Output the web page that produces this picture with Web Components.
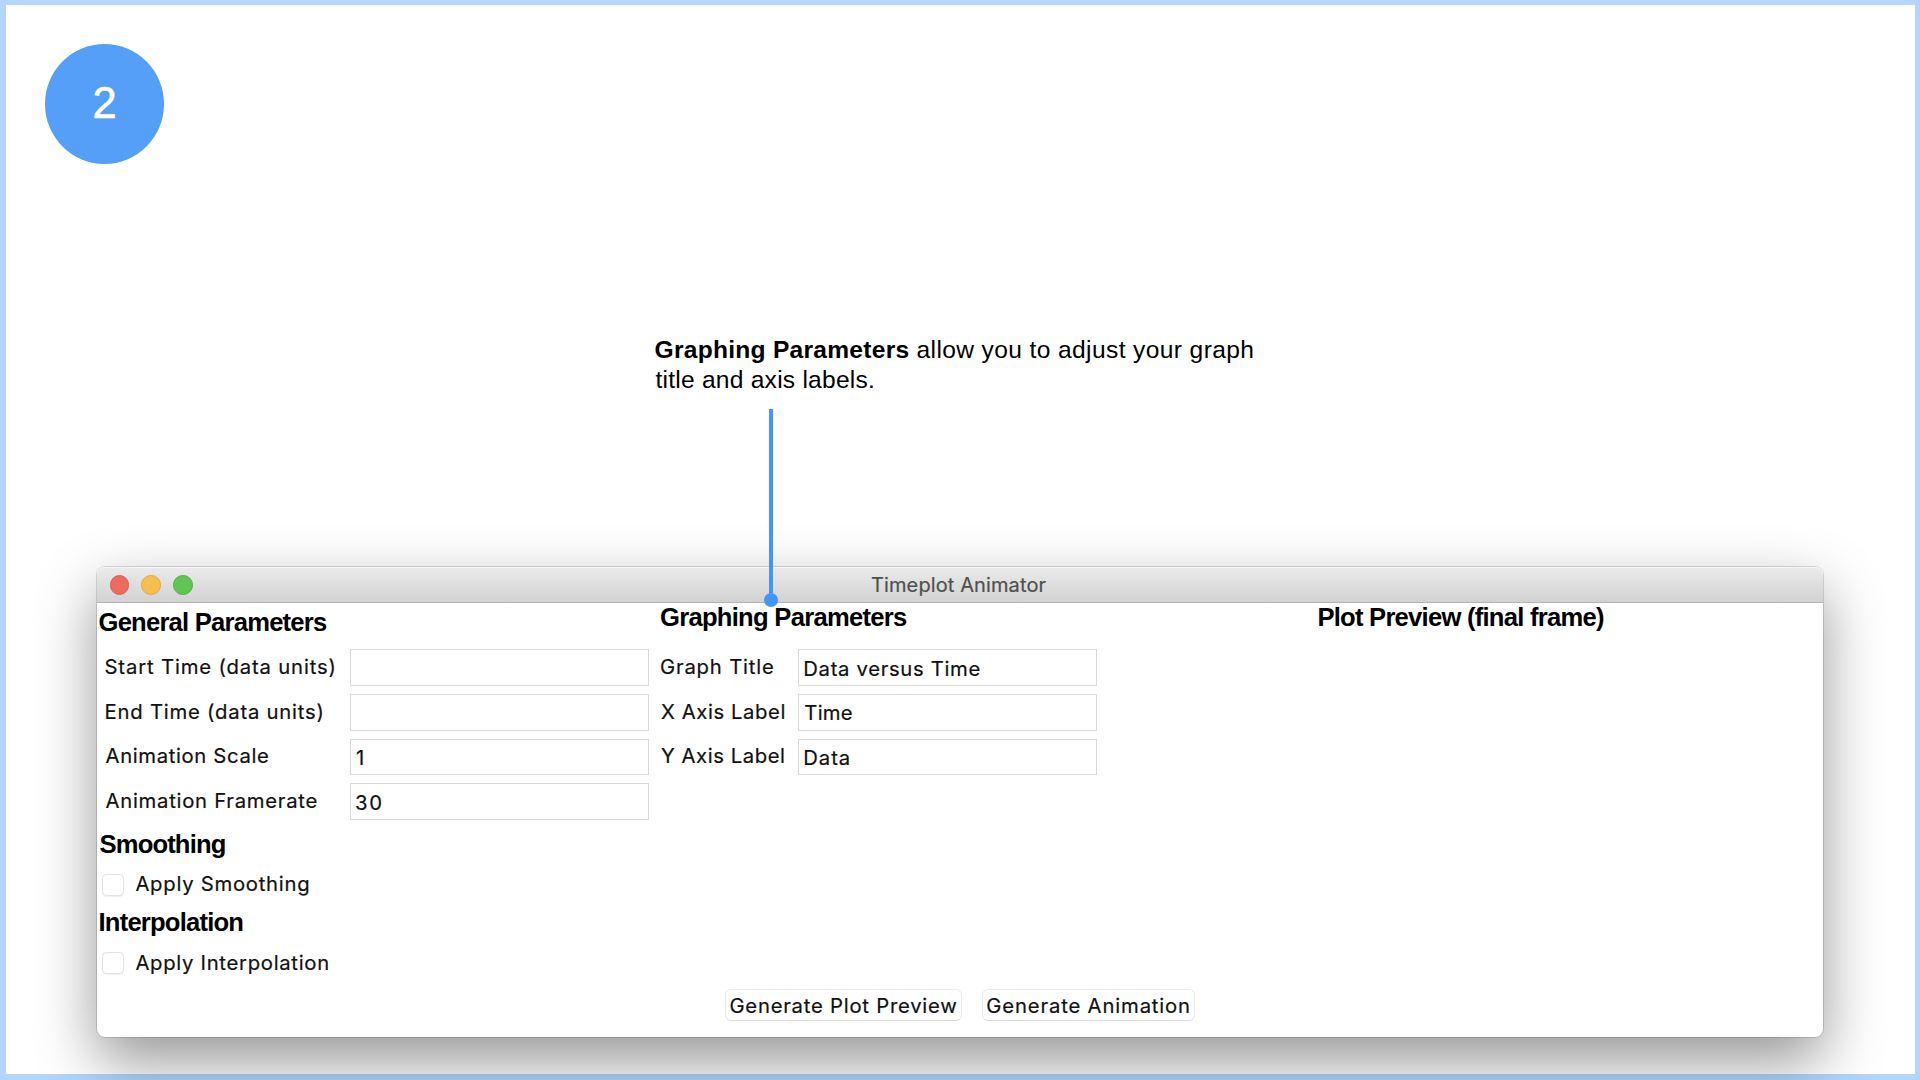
<!DOCTYPE html>
<html lang="en">
<head>
<meta charset="utf-8">
<title>Timeplot Animator</title>
<style>
html,body{margin:0;width:1920px;height:1080px;overflow:hidden;background:#fff}
</style>
</head>
<body>
<guide-page></guide-page>
<script>
const define = (name, html, setup) => {
  const tpl = document.createElement('template');
  tpl.innerHTML = html;
  customElements.define(name, class extends HTMLElement {
    constructor() {
      super();
      this.attachShadow({ mode: 'open' }).append(tpl.content.cloneNode(true));
    }
    connectedCallback() { if (setup) setup(this, this.shadowRoot); }
  });
};

const pen = document.createElement('canvas').getContext('2d');

// A line of text whose letters are spaced to fill the width in `w`.
define('fit-text', `<style>
  :host{display:block;white-space:pre;flex:none;line-height:var(--lh,24px)}
  span{display:block}
</style><span><slot></slot></span>`, (el, root) => {
  const text = el.textContent, cs = getComputedStyle(el);
  pen.font = cs.fontWeight + ' ' + cs.fontSize + ' ' + cs.fontFamily;
  const m = pen.measureText(text);
  const ink = m.actualBoundingBoxRight + m.actualBoundingBoxLeft;
  const w = parseFloat(el.getAttribute('w'));
  const span = root.querySelector('span');
  if (text.length > 1) span.style.letterSpacing = (w - ink - .5) / (text.length - 1) + 'px';
  span.style.marginLeft = m.actualBoundingBoxLeft + 'px';
  el.style.width = w + 'px';
});

define('section-title', `<style>
  :host{display:block;font:bold 25.6px "Liberation Sans",Arial,sans-serif;color:#000;--lh:30px;height:30px;-webkit-text-stroke:0}
</style><slot></slot>`);

define('form-row', `<style>
  :host{display:flex;align-items:center;height:44.67px}
  .label{width:var(--label);flex:none;margin-top:-1px}
  .field{box-sizing:border-box;width:298.8px;height:36.6px;border:1.3px solid #d9d9d9;background:#fff;display:flex;align-items:center;padding:2px 0 0 5px}
</style><div class="label"><slot></slot></div><div class="field"><slot name="value"></slot></div>`);

define('check-row', `<style>
  :host{display:flex;align-items:center;box-sizing:border-box;height:48.4px;padding:4px 0 0 2.5px;gap:11.2px}
  i{box-sizing:border-box;width:22.2px;height:22.2px;border:1px solid #e2e2e2;border-radius:4.5px;background:#fff;box-shadow:0 .5px 1px rgba(0,0,0,.06)}
  ::slotted(*){margin-top:-1px}
</style><i></i><slot></slot>`);

define('push-button', `<style>
  :host{display:flex;align-items:center;justify-content:center;box-sizing:border-box;height:32px;border:1px solid #ebebeb;border-bottom-color:#dedede;border-radius:6px;background:#fff;padding:1px 4px 0}
</style><slot></slot>`);

define('title-bar', `<style>
  :host{display:grid;grid-template-columns:1fr auto 1fr;align-items:center;box-sizing:border-box;height:35.5px;flex:none;
    background:linear-gradient(#ebebeb,#d2d2d2);border-bottom:1px solid #b4b4b4;box-shadow:inset 0 1px 0 #f6f6f6;border-radius:8px 8px 0 0;color:#505050;font-size:20px}
  ::slotted(*){margin:2px 2px 0 0}
  .lights{display:flex;gap:12.3px;padding:1px 0 0 12.5px}
  .lights i{box-sizing:border-box;width:19.6px;height:19.6px;border-radius:50%;background:#ed6a5e;border:1px solid #dc5f55}
  .lights i:nth-child(2){background:#f5bf4f;border-color:#deab43}
  .lights i:nth-child(3){background:#61c554;border-color:#54b046}
</style><div class="lights"><i></i><i></i><i></i></div><slot></slot><div></div>`);

define('app-window', `<style>
  :host{display:flex;flex-direction:column;width:1726px;height:470px;border-radius:8px;background:#fff;
    box-shadow:0 0 0 1px rgba(0,0,0,.13),0 24px 60px rgba(0,0,0,.42);
    font:20.3px Inter,"Liberation Sans",sans-serif;color:#111;-webkit-text-stroke:.2px}
  .cols{display:flex;flex:1}
  .general{width:564px;box-sizing:border-box;padding:4.8px 0 0 2.5px}
  .general form-row{padding-left:6px;--label:244.5px}
  .general .first{margin-bottom:8px}
  .general .next{margin-top:4.8px}
  .graph{width:657.4px;--label:137.3px}
  .graph section-title,.preview section-title{margin-top:-1px}
  .graph section-title{margin-bottom:13.8px}
  .actions{display:flex;justify-content:center;gap:20.6px;height:48px;flex:none}
</style>
<title-bar><fit-text w="176">Timeplot Animator</fit-text></title-bar>
<div class="cols">
  <div class="general">
    <section-title class="first"><fit-text w="228">General Parameters</fit-text></section-title>
    <form-row><fit-text w="229.5">Start Time (data units)</fit-text></form-row>
    <form-row><fit-text w="217.5">End Time (data units)</fit-text></form-row>
    <form-row><fit-text w="163">Animation Scale</fit-text><fit-text slot="value" w="8">1</fit-text></form-row>
    <form-row><fit-text w="211.5">Animation Framerate</fit-text><fit-text slot="value" w="25.8">30</fit-text></form-row>
    <section-title class="next"><fit-text w="125.7">Smoothing</fit-text></section-title>
    <check-row><fit-text w="173.3">Apply Smoothing</fit-text></check-row>
    <section-title><fit-text w="144.3">Interpolation</fit-text></section-title>
    <check-row><fit-text w="193.3">Apply Interpolation</fit-text></check-row>
  </div>
  <div class="graph">
    <section-title><fit-text w="246.5">Graphing Parameters</fit-text></section-title>
    <form-row><fit-text w="112.5">Graph Title</fit-text><fit-text slot="value" w="175.7">Data versus Time</fit-text></form-row>
    <form-row><fit-text w="124">X Axis Label</fit-text><fit-text slot="value" w="48">Time</fit-text></form-row>
    <form-row><fit-text w="123.5">Y Axis Label</fit-text><fit-text slot="value" w="45">Data</fit-text></form-row>
  </div>
  <div class="preview"><section-title><fit-text w="286">Plot Preview (final frame)</fit-text></section-title></div>
</div>
<div class="actions">
  <push-button><fit-text w="226.3">Generate Plot Preview</fit-text></push-button>
  <push-button><fit-text w="202.3">Generate Animation</fit-text></push-button>
</div>`);

define('step-badge', `<style>
  :host{display:flex;align-items:center;justify-content:center;width:119px;height:119.5px;border-radius:50%;background:#559ff9;color:#fff;
    font:43.5px "Liberation Sans",Arial,sans-serif;-webkit-text-stroke:.6px #fff}
</style><slot></slot>`);

define('call-out', `<style>
  :host{display:block;font:24.6px "Liberation Sans",Arial,sans-serif;color:#000;--lh:30px}
  .line{display:flex;gap:8.5px}
  b{font-weight:bold}
  .stem{display:flex;flex-direction:column;align-items:center;width:14px;margin:14px 0 0 108px}
  .stem i{width:4px;height:184px;background:#4595f9}
  .stem u{width:14px;height:14px;border-radius:50%;background:#4595f9}
</style>
<div class="line"><b><fit-text w="253.5">Graphing Parameters</fit-text></b><fit-text w="336.3">allow you to adjust your graph</fit-text></div>
<fit-text w="218">title and axis labels.</fit-text>
<div class="stem"><i></i><u></u></div>`);

define('guide-page', `<style>
  :host{display:block;position:relative;box-sizing:border-box;width:1920px;height:1080px;overflow:hidden;background:#fff}
  .frame{width:1909.2px;height:1068.8px;box-shadow:0 0 0 12px #b4d5fd;margin:0;position:absolute;left:5.5px;top:5.3px}
  step-badge{position:absolute;left:45px;top:44px}
  app-window{position:absolute;left:97px;top:567px}
  call-out{position:absolute;left:655.5px;top:335.4px}
</style>
<div class="frame"></div>
<step-badge>2</step-badge>
<app-window></app-window>
<call-out></call-out>`);
</script>
</body>
</html>
